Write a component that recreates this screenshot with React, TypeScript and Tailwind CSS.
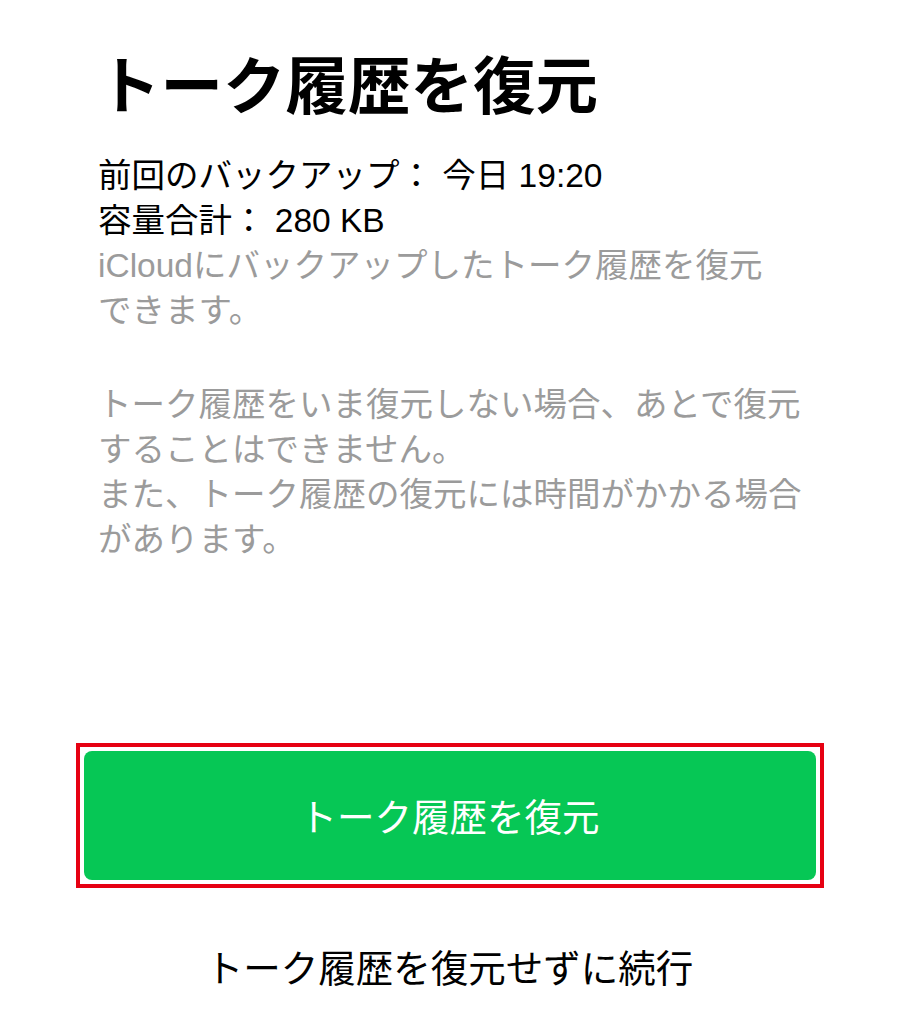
const jp = { fontFamily: '"Noto Sans CJK JP", "Noto Sans", sans-serif' };
const mixed = { fontFamily: '"Liberation Sans", "Noto Sans CJK JP", sans-serif' };

export default function App() {
  return (
    <div className="flex h-[1024px] w-[899px] flex-col overflow-hidden bg-white" style={jp}>
      <div className="pl-[98px] pr-[40px]">
        <h1 className="mt-[45px] text-[62.5px] font-bold leading-[74px] text-black">
          トーク履歴を復元
        </h1>

        <div className="mt-[34px] whitespace-nowrap text-[33.5px] leading-[45px]" style={mixed}>
          <p className="text-black">前回のバックアップ： 今日 19:20</p>
          <p className="text-black">容量合計： 280 KB</p>
          <p className="text-[#9b9b9b]">
            iCloudにバックアップしたトーク履歴を復元
            <br />
            できます。
          </p>
          <p className="mt-[49px] text-[#9b9b9b]">
            トーク履歴をいま復元しない場合、あとで復元
            <br />
            することはできません。
            <br />
            また、トーク履歴の復元には時間がかかる場合
            <br />
            があります。
          </p>
        </div>
      </div>

      <div className="mt-auto flex flex-col items-center pb-[34px]">
        <div className="w-[748px] border-[4px] border-[#e60012] bg-white p-[4px]">
          <button className="flex h-[129px] w-full items-center justify-center rounded-[8px] bg-[#06c755] text-[37.5px] text-white">
            トーク履歴を復元
          </button>
        </div>
        <button className="mt-[54px] text-[37.5px] leading-[48px] text-black">
          トーク履歴を復元せずに続行
        </button>
      </div>
    </div>
  );
}
